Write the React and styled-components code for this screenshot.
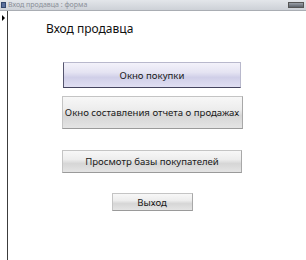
import React from "react";
import styled, { createGlobalStyle, css } from "styled-components";

const Global = createGlobalStyle`
  html, body { margin: 0; padding: 0; background: #fff; }
  body { font-family: "Noto Sans", "Open Sans", sans-serif; }
`;

const buttons = [
  { label: "Окно покупки", w: 178, h: 26, gap: 0, accent: true },
  { label: "Окно составления отчета о продажах", w: 181, h: 33, gap: 8 },
  { label: "Просмотр базы покупателей", w: 180, h: 23, gap: 21 },
  { label: "Выход", w: 81, h: 18, gap: 20 },
];

const App = () => {
  return (
    <Window>
      <Global />
      <TitleBar>
        <TitleIcon />
        <TitleText>Вход продавца : форма</TitleText>
        <WinButton />
      </TitleBar>
      <Body>
        <Selector>
          <Arrow />
        </Selector>
        <Content>
          <Heading>Вход продавца</Heading>
          <Stack>
            {buttons.map((b) => (
              <FormButton
                key={b.label}
                $w={b.w}
                $h={b.h}
                $gap={b.gap}
                $accent={b.accent}
              >
                {b.label}
              </FormButton>
            ))}
          </Stack>
        </Content>
      </Body>
    </Window>
  );
};

const Window = styled.div`
  width: 306px;
  height: 260px;
  display: flex;
  flex-direction: column;
  overflow: hidden;
`;

const TitleBar = styled.div`
  height: 10px;
  display: flex;
  align-items: center;
  background: linear-gradient(#e3e6ea, #cdd1d7);
  border-bottom: 1px solid #a9adb3;
  padding: 0 2px 0 0;
`;

const TitleIcon = styled.span`
  width: 5px;
  height: 6px;
  margin: 0 2px 0 1px;
  background: #5a6f9c;
  border: 1px solid #34486e;
  box-sizing: border-box;
`;

const TitleText = styled.span`
  flex: 1;
  font-size: 7px;
  line-height: 10px;
  color: #8a8f98;
  white-space: nowrap;
`;

const WinButton = styled.span`
  width: 16px;
  height: 6px;
  background: linear-gradient(#9aa0a8, #5d636b);
  border: 1px solid #555;
  box-sizing: border-box;
`;

const Body = styled.div`
  flex: 1;
  display: flex;
`;

const Selector = styled.div`
  width: 7px;
  border-right: 1px solid #3c3c3c;
  padding-top: 4px;
`;

const Arrow = styled.div`
  width: 0;
  height: 0;
  margin-left: 2px;
  border-top: 3px solid transparent;
  border-bottom: 3px solid transparent;
  border-left: 3px solid #000;
`;

const Content = styled.div`
  flex: 1;
  padding: 10px 0 0 38px;
`;

const Heading = styled.div`
  font-size: 12px;
  line-height: 16px;
  color: #111;
`;

const Stack = styled.div`
  width: 182px;
  margin: 25px 0 0 15px;
  display: flex;
  flex-direction: column;
  align-items: center;
`;

const FormButton = styled.div`
  width: ${(p) => p.$w}px;
  height: ${(p) => p.$h}px;
  margin-top: ${(p) => p.$gap}px;
  box-sizing: border-box;
  display: flex;
  align-items: center;
  justify-content: center;
  font-size: 9.6px;
  color: #1a1a1a;
  white-space: nowrap;
  background: linear-gradient(#f7f7f7 0%, #ededed 40%, #d6d6d6 60%, #e4e4e4 100%);
  border: 1px solid #c4c4c4;
  border-bottom-color: #9a9a9a;
  border-right-color: #a8a8a8;
  ${(p) =>
    p.$accent &&
    css`
      background: linear-gradient(#f3f2fa 0%, #e4e3f2 40%, #d0cfe8 60%, #e0dff2 100%);
      border: 1px solid #b8b8cc;
      border-left-color: #55556e;
      border-bottom-color: #45455e;
    `}
`;

export default App;
